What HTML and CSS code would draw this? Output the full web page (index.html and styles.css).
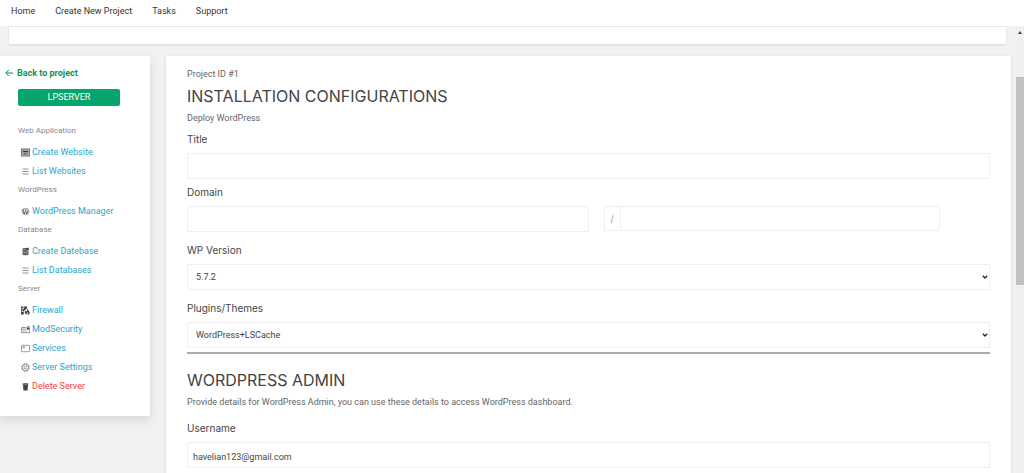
FILE: index.html
```
<!DOCTYPE html>
<html lang="en">

<head>
    <meta charset="UTF-8">
    <meta name="viewport" content="width=device-width, initial-scale=1.0">
    <title>Installation Configurations</title>
    <link rel="stylesheet" href="styles.css">
</head>

<body>

    <!-- top navigation -->
    <nav class="topbar">
        <a href="#">Home</a>
        <a href="#">Create New Project</a>
        <a href="#">Tasks</a>
        <a href="#">Support</a>
    </nav>

    <div class="workspace">
        <div class="page">
            <div class="banner"></div>

            <div class="columns">
                <!-- sidebar -->
                <aside class="sidebar">
                    <a class="back" href="#">
                        <svg viewBox="0 0 8 8"><path d="M8 4H.8M3.800 1L.8 4l3 3" fill="none" stroke="currentColor"/></svg>
                        Back to project
                    </a>
                    <button class="server-btn" type="button">LPSERVER</button>

                    <h3 class="group">Web Application</h3>
                    <a class="item" href="#">
                        <svg viewBox="0 0 9 9"><path d="M0 .5h9v8H0z" fill="#777"/><path d="M1.500 2h6v5.300h-6z" fill="#999" stroke="#ccc" stroke-width=".5"/><path d="M2 3h5v1H2z" fill="#333"/><path d="M3 5h3v1.800H3z" fill="#777"/></svg>
                        Create Website
                    </a>
                    <a class="item" href="#">
                        <svg viewBox="0 0 9 9"><path d="M1.500 2h6M1.500 4.500h6M1.500 7h6" stroke="#777" stroke-width=".8"/></svg>
                        List Websites
                    </a>

                    <h3 class="group">WordPress</h3>
                    <a class="item" href="#">
                        <svg viewBox="0 0 9 9"><circle cx="4.500" cy="4.500" r="3.300" fill="none" stroke="#777" stroke-width=".7"/><path d="M1.700 3l1.600 4 1.200-3.400L5.700 7l1.500-4M1.500 2.800h1.600M3.900 2.800h1.800" fill="none" stroke="#555" stroke-width=".9"/></svg>
                        WordPress Manager
                    </a>

                    <h3 class="group">Database</h3>
                    <a class="item" href="#">
                        <svg viewBox="0 0 9 9"><path d="M1.500 1.500l1-.6h4l1 .6v6l-1 .7h-4l-1-.7z" fill="#666"/><path d="M2.500 2.500h1.700M2.500 5.500h4" stroke="#bbb" stroke-width=".6"/><path d="M5.300.8h2.400v2.600H5.300z" fill="#444"/><path d="M5.200 3.600h2.600" stroke="#ddd" stroke-width=".5"/></svg>
                        Create Datebase
                    </a>
                    <a class="item" href="#">
                        <svg viewBox="0 0 9 9"><path d="M1.500 2h6M1.500 4.500h6M1.500 7h6" stroke="#777" stroke-width=".8"/></svg>
                        List Databases
                    </a>

                    <h3 class="group">Server</h3>
                    <a class="item" href="#">
                        <svg viewBox="0 0 9 9"><path d="M0 .5h2.500v2H0zM3 .5h3v1.800L4.300 4H3zM0 3h1.500v2.200H0zM2 3h1.500v2.200H2zM0 5.800h2.800v2.700H0z" fill="#444"/><path d="M6.300 2.200c.2 1.600 2.500 2.700 2.500 4.500 0 1.200-1 1.900-2.400 1.900S3.800 7.900 3.800 6.600c0-1 .6-1.600 1.100-2.100l.5 1c.8-.9 1.100-2 .9-3.300z" fill="#444"/><path d="M6.300 6l.9 1.400-.8.700-.8-.7z" fill="#fff"/></svg>
                        Firewall
                    </a>
                    <a class="item" href="#">
                        <svg viewBox="0 0 9 9"><path d="M5.500 2.500H.6v5.200h7.800V4.500M.6 4.200h5M2 6h1.500M4.200 6h1.600" fill="none" stroke="#777" stroke-width=".8"/><path d="M6 2.500h2.700v2H6z" fill="#444"/><path d="M6.600 2.500V1.300h1.500v1.200" fill="none" stroke="#555" stroke-width=".6"/></svg>
                        ModSecurity
                    </a>
                    <a class="item" href="#">
                        <svg viewBox="0 0 9 9"><rect x=".5" y="1.300" width="8" height="6.400" rx=".6" fill="none" stroke="#888" stroke-width=".8"/><path d="M1.700 2.500h2v1.800h-2zM4.300 2.700h1" fill="#bbb" stroke="#999" stroke-width=".4"/></svg>
                        Services
                    </a>
                    <a class="item" href="#">
                        <svg viewBox="0 0 9 9"><circle cx="4.500" cy="4.500" r="3.700" fill="none" stroke="#777" stroke-width="1" stroke-dasharray="1.900 1"/><circle cx="4.500" cy="4.500" r="3.200" fill="none" stroke="#777" stroke-width=".7"/><circle cx="4.500" cy="4.500" r="1.400" fill="none" stroke="#777" stroke-width=".7"/></svg>
                        Server Settings
                    </a>
                    <a class="item danger" href="#">
                        <svg viewBox="0 0 9 9"><path d="M1.500 1.400h2L4 .9h1l.5.500h2v1h-6zM2 2.800h5l-.4 5.600H2.400z" fill="#444"/></svg>
                        Delete Server
                    </a>
                </aside>

                <!-- install form -->
                <main class="panel">
                    <p class="note">Project ID #1</p>
                    <h2>INSTALLATION CONFIGURATIONS</h2>
                    <p class="note">Deploy WordPress</p>

                    <form>
                        <div class="field">
                            <label for="title">Title</label>
                            <input class="control" type="text" id="title">
                        </div>

                        <div class="field">
                            <label for="domain">Domain</label>
                            <div class="domain-row">
                                <input class="control" type="text" id="domain">
                                <div class="path-group">
                                    <label class="addon" for="path">/</label>
                                    <input class="control" type="text" id="path">
                                </div>
                            </div>
                        </div>

                        <div class="field spaced">
                            <label for="version">WP Version</label>
                            <div class="select-wrap">
                                <select class="control" id="version">
                                    <option>5.7.2</option>
                                </select>
                                <svg viewBox="0 0 6 4"><path d="M.8.8L3 3 5.200.8" fill="none" stroke="#222" stroke-width="1.300"/></svg>
                            </div>
                        </div>

                        <div class="field spaced">
                            <label for="plugins">Plugins/Themes</label>
                            <div class="select-wrap">
                                <select class="control" id="plugins">
                                    <option>WordPress+LSCache</option>
                                </select>
                                <svg viewBox="0 0 6 4"><path d="M.8.8L3 3 5.200.8" fill="none" stroke="#222" stroke-width="1.300"/></svg>
                            </div>
                        </div>

                        <hr>

                        <h2>WORDPRESS ADMIN</h2>
                        <p class="note">Provide details for WordPress Admin, you can use these details to access WordPress dashboard.</p>

                        <div class="field spaced">
                            <label for="username">Username</label>
                            <input class="control" type="text" id="username" value="havelian123@gmail.com">
                        </div>
                    </form>
                </main>
            </div>
        </div>

        <!-- scroll track -->
        <div class="track">
            <svg viewBox="0 0 4 3"><path d="M0 3l2-3 2 3z" fill="#444"/></svg>
            <div class="thumb"></div>
        </div>
    </div>

</body>

</html>
```
FILE: styles.css
```
* {
    box-sizing: border-box;
}

html,
body {
    height: 100%;
    margin: 0;
    overflow: hidden;
    font-family: Roboto, Inter, sans-serif;
    font-size: 9px;
    color: #444;
}

body {
    display: flex;
    flex-direction: column;
}

a {
    text-decoration: none;
}

h2,
h3,
p {
    margin: 0;
    font-weight: 400;
}

/* top navigation */
.topbar {
    display: flex;
    flex: none;
    gap: 20px;
    padding: 3px 11px 7px;
    line-height: 16px;
    background: #fff;
}

.topbar a {
    color: #333;
}

/* area below the navigation */
.workspace {
    display: flex;
    flex: 1;
    min-height: 0;
    background: #f2f2f2;
}

.page {
    flex: 1;
    overflow: hidden;
}

.banner {
    height: 18px;
    margin: 0 10px 12px 9px;
    background: #fff;
    border-top: 1px solid #e8e8e8;
    box-shadow: 0 1px 2px rgba(0, 0, 0, 0.12);
}

.columns {
    display: flex;
    align-items: flex-start;
    gap: 16px;
    padding-right: 5px;
}

/* sidebar */
.sidebar {
    width: 150px;
    flex: none;
    padding: 9px 0 20px;
    background: #fff;
    box-shadow: 0 4px 10px rgba(0, 0, 0, 0.12);
}

.back {
    display: flex;
    align-items: center;
    gap: 4px;
    padding-left: 5px;
    line-height: 16px;
    font-weight: 700;
    color: #0c9455;
}

.back svg {
    width: 8px;
    height: 8px;
}

.server-btn {
    display: block;
    width: 102px;
    height: 17px;
    margin: 8px 0 16px 18px;
    padding: 0;
    border: none;
    border-radius: 2px;
    background: #05a56c;
    color: #fff;
    font-family: inherit;
    font-size: 9px;
    line-height: 17px;
}

.group {
    margin-bottom: 4px;
    padding-left: 18px;
    font-size: 8px;
    line-height: 17px;
    color: #888;
}

.item {
    display: flex;
    align-items: center;
    gap: 2px;
    padding-left: 21px;
    line-height: 19px;
    color: #1fa6cc;
}

.item svg {
    width: 9px;
    height: 9px;
}

.danger {
    color: #f73c3c;
}

/* install form */
.panel {
    flex: 1;
    min-width: 0;
    padding: 11px 21px 60px;
    background: #fff;
    box-shadow: 0 1px 4px rgba(0, 0, 0, 0.1);
}

.note {
    line-height: 15px;
    color: #666;
}

h2 {
    margin-bottom: 1px;
    font-family: Inter, sans-serif;
    font-size: 16px;
    line-height: 28px;
    color: #444;
}

.field {
    margin: 3px 0;
}

.spaced {
    margin-top: 8px;
}

.field label {
    display: block;
    margin-bottom: 4px;
    font-family: Inter, sans-serif;
    font-size: 10px;
    line-height: 20px;
    color: #444;
}

.control {
    display: block;
    width: 100%;
    height: 26px;
    padding: 3px 5px 0;
    border: 1px solid #efefef;
    border-radius: 1px;
    background: #fff;
    color: #444;
    font-family: inherit;
    font-size: 9px;
    outline: none;
}

.domain-row {
    display: grid;
    grid-template-columns: 50% 1fr;
    gap: 15px;
}

.path-group {
    display: flex;
    width: 87%;
    height: 25px;
}

.path-group .control {
    height: 25px;
}

.field .addon {
    flex: none;
    width: 16px;
    margin: 0;
    border: 1px solid #efefef;
    border-right: none;
    font-size: 9px;
    line-height: 23px;
    text-align: center;
    color: #999;
}

.select-wrap {
    position: relative;
}

.select-wrap .control {
    padding: 0 8px;
    appearance: none;
}

/* arrow drawn over the select */
.select-wrap svg {
    position: absolute;
    top: 11px;
    right: 2px;
    width: 6px;
    height: 4px;
    pointer-events: none;
}

hr {
    height: 2px;
    margin: 4px 0 12px;
    border: none;
    background: #aaa;
}

/* scroll track */
.track {
    display: flex;
    flex: none;
    flex-direction: column;
    align-items: center;
    width: 8px;
    padding-top: 5px;
    background: #f0f0f0;
}

.track svg {
    width: 4px;
    height: 3px;
}

.thumb {
    width: 8px;
    height: 47%;
    margin-top: 43px;
    background: #c1c1c1;
}
```
